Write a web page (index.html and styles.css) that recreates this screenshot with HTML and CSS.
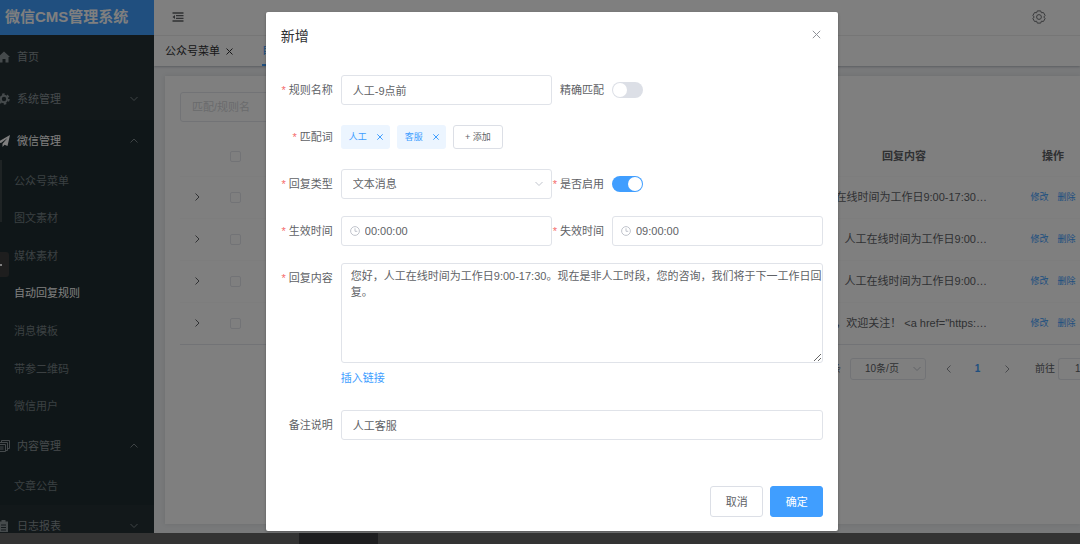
FILE: index.html
```html
<!DOCTYPE html>
<html lang="zh-CN">
<head>
<meta charset="utf-8">
<title>微信CMS管理系统</title>
<link rel="stylesheet" href="styles.css">
</head>
<body>
<div class="app">
  <div class="shell">
    <aside class="sidebar">
      <h1 class="brand">微信CMS管理系统</h1>
      <nav class="menu">
        <a class="item" href="#"><svg class="ico" viewBox="0 0 12 12"><path d="M6 .5 0 6h1.500v5.500h3V8h3v3.500h3V6H12z" fill="currentColor"/></svg><span>首页</span></a>
        <a class="item" href="#"><svg class="ico" viewBox="0 0 12 12"><circle cx="6" cy="6" r="3.200" fill="none" stroke="currentColor" stroke-width="2"/><circle cx="6" cy="6" r="4.800" fill="none" stroke="currentColor" stroke-width="1.800" stroke-dasharray="2.500 2.530"/></svg><span>系统管理</span><svg class="arrow" viewBox="0 0 8 8"><path d="M.5 2 4 5.500 7.500 2"/></svg></a>
        <div class="group">
          <a class="item open" href="#"><svg class="ico" viewBox="0 0 12 12"><path d="M12 0 0 6.800l3 1.300L9.500 3 4.500 8.800V12l2-2.300 3 1.300z" fill="currentColor"/></svg><span>微信管理</span><svg class="arrow" viewBox="0 0 8 8"><path d="M.5 5.500 4 2l3.500 3.500"/></svg></a>
          <div class="subs">
            <a href="#">公众号菜单</a>
            <a href="#">图文素材</a>
            <a href="#">媒体素材</a>
            <a href="#" class="current">自动回复规则</a>
            <a href="#">消息模板</a>
            <a href="#">带参二维码</a>
            <a href="#">微信用户</a>
          </div>
          <a class="item" href="#"><svg class="ico" viewBox="0 0 12 12"><path d="M3.500 2.500V.500h8v8H9.500M1.500 4.500v-2h8v8h-2M0 4.500h7.500v7H0M2 7h3.500M2 9h3.500" fill="none" stroke="currentColor"/></svg><span>内容管理</span><svg class="arrow" viewBox="0 0 8 8"><path d="M.5 5.500 4 2l3.500 3.500"/></svg></a>
          <div class="subs single"><a href="#">文章公告</a></div>
        </div>
        <a class="item" href="#"><svg class="ico" viewBox="0 0 12 12"><path d="M1 1.500h2.500V0h4v1.500H10V12H1z" fill="currentColor"/><path d="M3 5h5M3 7.500h5M3 10h5" stroke="#263238"/></svg><span>日志报表</span><svg class="arrow" viewBox="0 0 8 8"><path d="M.5 2 4 5.500 7.500 2"/></svg></a>
      </nav>
      <i class="rail"></i><i class="handle"></i>
    </aside>
    <main class="main">
      <header class="topbar">
        <button class="plain" aria-label="折叠菜单"><svg width="12" height="10" viewBox="0 0 12 10"><path d="M.5 1h11M4 3.700h7.500M4 6.300h7.500M.5 9h11" stroke="#606266" stroke-width="1.300"/><path d="M3 3v4L.5 5z" fill="#606266"/></svg></button>
        <button class="plain" aria-label="设置"><svg width="14" height="14" viewBox="0 0 14 14" fill="none" stroke="#707276" stroke-linejoin="round"><path d="M5.300.9h3.400l.7 1.900 2-.3 1.700 2.900L11.800 7l1.300 1.600-1.700 2.900-2-.3-.7 1.900H5.300l-.7-1.900-2 .3L.9 8.600 2.200 7 .9 5.400l1.700-2.900 2 .3z"/><circle cx="7" cy="7" r="2.400"/></svg></button>
      </header>
      <div class="tabs">
        <a class="tab" href="#">公众号菜单<svg width="7" height="7" viewBox="0 0 7 7"><path d="m.5.5 6 6m0-6-6 6" stroke="currentColor"/></svg></a>
        <a class="tab on" href="#">自动回复规则</a>
      </div>
      <section class="card">
        <input class="search" placeholder="匹配/规则名" aria-label="匹配/规则名">
        <table class="list">
          <colgroup><col class="c-exp"><col class="c-chk"><col><col class="c-text"><col class="c-ops"></colgroup>
          <thead><tr><th></th><th><input type="checkbox" aria-label="全选"></th><th></th><th class="txt-head">回复内容</th><th class="ops">操作</th></tr></thead>
          <tbody>
            <tr><td><button class="plain exp" aria-label="展开"><svg viewBox="0 0 8 8"><path d="M2.500.5 6 4 2.500 7.500"/></svg></button></td><td><input type="checkbox" aria-label="选择"></td><td></td><td class="txt">您好，人工在线时间为工作日9:00-17:30…</td><td class="ops"><a href="#">修改</a><a href="#">删除</a></td></tr>
            <tr><td><button class="plain exp" aria-label="展开"><svg viewBox="0 0 8 8"><path d="M2.500.5 6 4 2.500 7.500"/></svg></button></td><td><input type="checkbox" aria-label="选择"></td><td></td><td class="txt">您好，人工在线时间为工作日9:00…</td><td class="ops"><a href="#">修改</a><a href="#">删除</a></td></tr>
            <tr><td><button class="plain exp" aria-label="展开"><svg viewBox="0 0 8 8"><path d="M2.500.5 6 4 2.500 7.500"/></svg></button></td><td><input type="checkbox" aria-label="选择"></td><td></td><td class="txt">您好，人工在线时间为工作日9:00…</td><td class="ops"><a href="#">修改</a><a href="#">删除</a></td></tr>
            <tr><td><button class="plain exp" aria-label="展开"><svg viewBox="0 0 8 8"><path d="M2.500.5 6 4 2.500 7.500"/></svg></button></td><td><input type="checkbox" aria-label="选择"></td><td></td><td class="txt">您好，欢迎关注！ &lt;a href="https:…</td><td class="ops"><a href="#">修改</a><a href="#">删除</a></td></tr>
          </tbody>
        </table>
        <div class="pager">
          <span class="total">共 4 条</span>
          <span class="size"><select aria-label="每页条数"><option>10条/页</option></select><svg class="arrow" viewBox="0 0 8 8"><path d="M.5 2 4 5.500 7.500 2"/></svg></span>
          <button class="plain pg" aria-label="上一页"><svg viewBox="0 0 8 8"><path d="M5.500.5 2 4l3.500 3.500"/></svg></button>
          <button class="plain pg num">1</button>
          <button class="plain pg" aria-label="下一页"><svg viewBox="0 0 8 8"><path d="M2.500.5 6 4 2.500 7.500"/></svg></button>
          <label class="goto">前往<input value="1"></label>
        </div>
      </section>
    </main>
    <div class="mask">
      <form class="dialog" role="dialog" aria-labelledby="dlg-title">
        <div class="dialog-head">
          <h2 id="dlg-title">新增</h2>
          <button type="button" class="plain" aria-label="关闭"><svg width="9" height="9" viewBox="0 0 9 9"><path d="m.8.8 7.400 7.400m0-7.400L.8 8.200" stroke="#909399"/></svg></button>
        </div>
        <div class="fields">
          <div class="field"><label class="req" for="f-name">规则名称</label><input class="box" id="f-name" value="人工-9点前"></div>
          <div class="field"><label for="f-exact">精确匹配</label><input type="checkbox" class="switch" id="f-exact"></div>
          <div class="field wide"><span class="label req">匹配词</span>
            <div class="tags">
              <span class="tag">人工<button type="button" class="plain" aria-label="移除人工"><svg width="6" height="6" viewBox="0 0 6 6"><path d="m.3.3 5.400 5.400m0-5.400L.3 5.700" stroke="#409eff"/></svg></button></span>
              <span class="tag">客服<button type="button" class="plain" aria-label="移除客服"><svg width="6" height="6" viewBox="0 0 6 6"><path d="m.3.3 5.400 5.400m0-5.400L.3 5.700" stroke="#409eff"/></svg></button></span>
              <button type="button" class="add">+ 添加</button>
            </div>
          </div>
          <div class="field"><label class="req" for="f-type">回复类型</label><div class="wrap"><select class="box" id="f-type"><option>文本消息</option></select><svg class="arrow" viewBox="0 0 8 8"><path d="M.5 2 4 5.500 7.500 2"/></svg></div></div>
          <div class="field"><label class="req" for="f-on">是否启用</label><input type="checkbox" class="switch" id="f-on" checked></div>
          <div class="field"><label class="req" for="f-start">生效时间</label><div class="wrap"><input class="box time" id="f-start" value="00:00:00"><svg class="clock" viewBox="0 0 10 10"><circle cx="5" cy="5" r="4.400"/><path d="M5 2.300v3h2.300"/></svg></div></div>
          <div class="field"><label class="req" for="f-end">失效时间</label><div class="wrap"><input class="box time" id="f-end" value="09:00:00"><svg class="clock" viewBox="0 0 10 10"><circle cx="5" cy="5" r="4.400"/><path d="M5 2.300v3h2.300"/></svg></div></div>
          <div class="field wide top"><label class="req" for="f-text">回复内容</label>
            <div class="stack"><textarea class="box" id="f-text">您好，人工在线时间为工作日9:00-17:30。现在是非人工时段，您的咨询，我们将于下一工作日回复。</textarea><a href="#">插入链接</a></div>
          </div>
          <div class="field wide"><label for="f-note">备注说明</label><input class="box" id="f-note" value="人工客服"></div>
        </div>
        <div class="dialog-foot"><button type="button" class="btn">取消</button><button type="button" class="btn primary">确定</button></div>
      </form>
    </div>
  </div>
  <div class="taskbar"><i></i></div>
</div>
</body>
</html>
```

FILE: styles.css
```css
* { box-sizing: border-box; }
body { margin: 0; font: 11px/16px "Liberation Sans", "Noto Sans CJK SC", sans-serif; color: #606266; }
h1, h2 { margin: 0; }
a { color: #409eff; text-decoration: none; }
input, select, textarea, button { font: inherit; color: inherit; margin: 0; }
.plain { padding: 0; border: 0; background: none; display: flex; align-items: center; justify-content: center; }
.app { height: 100vh; display: flex; flex-direction: column; overflow: hidden; }
.shell { flex: 1; min-height: 0; display: flex; position: relative; overflow: hidden; }

.sidebar { width: 154px; flex: none; background: #243035; position: relative; }
.brand { height: 35px; padding-left: 5px; background: #409eff; color: #fff; font-size: 15px; line-height: 33px; white-space: nowrap; }
.menu { padding-top: 1px; }
.item { height: 42px; display: flex; align-items: center; padding-right: 16px; color: #8b9498; }
.item span { flex: 1; padding-left: 7px; }
.ico { width: 12px; height: 12px; margin-left: -2px; }
.arrow { width: 8px; height: 8px; fill: none; stroke: currentColor; }
.group { background: #1f2d30; }
.open, .subs .current { color: #fff; }
.item .arrow { color: #7d878b; }
.subs { height: 263px; display: grid; grid-auto-rows: 1fr; }
.subs.single { height: 38px; }
.subs a { display: flex; align-items: center; padding-left: 14px; color: #768084; }
.subs a.current { color: #fff; }
.rail { position: absolute; left: 0; top: 160px; width: 2px; height: 62px; background: #3c4648; }
.handle { position: absolute; left: 0; top: 252px; width: 9px; height: 25px; background: #3c3c3c; border-radius: 0 3px 3px 0; }
.handle::after { content: ""; position: absolute; left: 0; top: 12px; width: 2px; height: 2px; background: #fff; }

.main { flex: 1; min-width: 0; background: #f0f2f4; display: flex; flex-direction: column; }
.topbar { height: 36px; padding: 0 34px 2px 18px; display: flex; justify-content: space-between; background: #fff; border-bottom: 1px solid #f0f0f0; }
.tabs { height: 30px; padding-left: 11px; display: flex; gap: 29px; background: #fff; box-shadow: 0 1px 2px #b8bcc4; }
.tab { display: flex; align-items: center; gap: 6px; color: #303133; }
.tab.on { color: #409eff; border-bottom: 2px solid #409eff; }
.card { flex: 1; margin: 10px 0 9px 11px; padding: 16px 0 0 15px; background: #fff; box-shadow: 0 0 4px #d8dadd; }
.search { display: block; width: 180px; height: 30px; padding: 0 11px; border: 1px solid #e4e7ed; border-radius: 3px; background: #fff; }
.search::placeholder { color: #d4d6da; }
.list { width: 100%; margin-top: 15px; table-layout: fixed; border-collapse: collapse; border-bottom: 1px solid #e4e7ed; }
.c-exp { width: 34px; } .c-chk { width: 42px; } .c-text { width: 220px; } .c-ops { width: 82px; }
.list th { height: 39px; padding: 0; color: #606266; }
.list th.txt-head { padding-left: 32px; }
.list td { height: 42px; padding: 0; border-top: 1px solid #fafafb; text-align: center; }
.list input { appearance: none; display: block; width: 11px; height: 11px; margin: 0 auto; border: 1px solid #e4e7ed; border-radius: 2px; }
.list .txt { padding-right: 11px; text-align: right; white-space: nowrap; color: #606266; }
.list .ops { padding-left: 28px; }
td.ops { font-size: 9px; white-space: nowrap; }
td.ops a + a { margin-left: 9px; }
.exp { width: 100%; }
.exp svg, .pg svg { width: 8px; height: 8px; fill: none; stroke: currentColor; }
.pager { display: flex; justify-content: flex-end; align-items: center; padding-top: 13px; font-size: 10px; }
.total { margin-right: 9px; }
.size { position: relative; width: 76px; margin-right: 8px; }
.size select { appearance: none; width: 100%; height: 22px; padding: 0 14px; border: 1px solid #e4e7ed; border-radius: 3px; background: #fff; }
.size .arrow { position: absolute; right: 5px; top: 7px; color: #c0c4cc; }
.pg { width: 29px; height: 22px; color: #909399; }
.num { color: #409eff; font-weight: bold; }
.goto { margin-left: 14px; display: flex; align-items: center; gap: 3px; }
.goto input { width: 22px; height: 22px; padding: 0 0 0 16px; border: 1px solid #e4e7ed; border-right: 0; border-radius: 3px 0 0 3px; background: #fff; }

.mask { position: absolute; inset: 0; display: flex; justify-content: center; align-items: flex-start; padding: 12px 0 0 24px; background: rgba(0, 0, 0, .5); }
.dialog { width: 53vw; padding: 15px 15px 14px; background: #fff; border-radius: 2px; box-shadow: 0 1px 3px rgba(0, 0, 0, .3); }
.dialog-head { display: flex; justify-content: space-between; height: 48px; align-items: flex-start; }
.dialog-head h2 { font-size: 14px; line-height: 18px; font-weight: normal; color: #303133; }
.dialog-head .plain { width: 13px; height: 14px; }
.fields { display: grid; grid-template-columns: 1fr 1fr; row-gap: 17px; }
.field { display: flex; align-items: center; min-height: 30px; }
.wide { grid-column: 1 / -1; }
.top { align-items: flex-start; }
.field > label, .label { width: 60px; flex: none; padding-right: 8px; text-align: right; line-height: 30px; white-space: nowrap; }
.req::before { content: "*"; color: #f56c6c; margin-right: 3px; }
.box { appearance: none; display: block; flex: 1; width: 100%; min-width: 0; height: 30px; padding: 0 11px; border: 1px solid #e0e3e9; border-radius: 3px; background: #fff; }
.wrap { flex: 1; position: relative; }
.wrap .arrow { position: absolute; right: 9px; top: 11px; color: #c0c4cc; }
.time { padding-left: 23px; }
.clock { position: absolute; left: 9px; top: 10px; width: 10px; height: 10px; fill: none; stroke: #c0c4cc; }
.stack { flex: 1; }
.stack a { display: block; line-height: 30px; }
textarea.box { height: 100px; padding: 4px 0 4px 9px; resize: vertical; overflow: hidden; }
.tags { display: flex; gap: 7px; align-items: center; font-size: 9px; }
.tag, .add { height: 24px; border-radius: 3px; white-space: nowrap; }
.tag { width: 49px; padding: 0 7px 0 8px; display: flex; align-items: center; justify-content: space-between; background: #ecf5ff; color: #409eff; }
.add { width: 50px; padding: 0; border: 1px solid #dcdfe6; background: #fff; }
.switch { appearance: none; width: 31px; height: 16px; padding: 1px; border-radius: 8px; background: #dcdfe6; }
.switch::before { content: ""; display: block; width: 14px; height: 14px; border-radius: 50%; background: #fff; }
.switch:checked { background: #409eff; }
.switch:checked::before { margin-left: auto; }
.dialog-foot { display: flex; justify-content: flex-end; gap: 7px; padding-top: 46px; }
.btn { width: 53px; height: 31px; padding: 0; border: 1px solid #dcdfe6; border-radius: 3px; background: #fff; }
.primary { background: #409eff; border-color: #409eff; color: #fff; }
.taskbar { height: 11px; flex: none; background: #333; padding-left: 299px; }
.taskbar i { display: block; width: 79px; height: 100%; background: #1e1e20; }
```
